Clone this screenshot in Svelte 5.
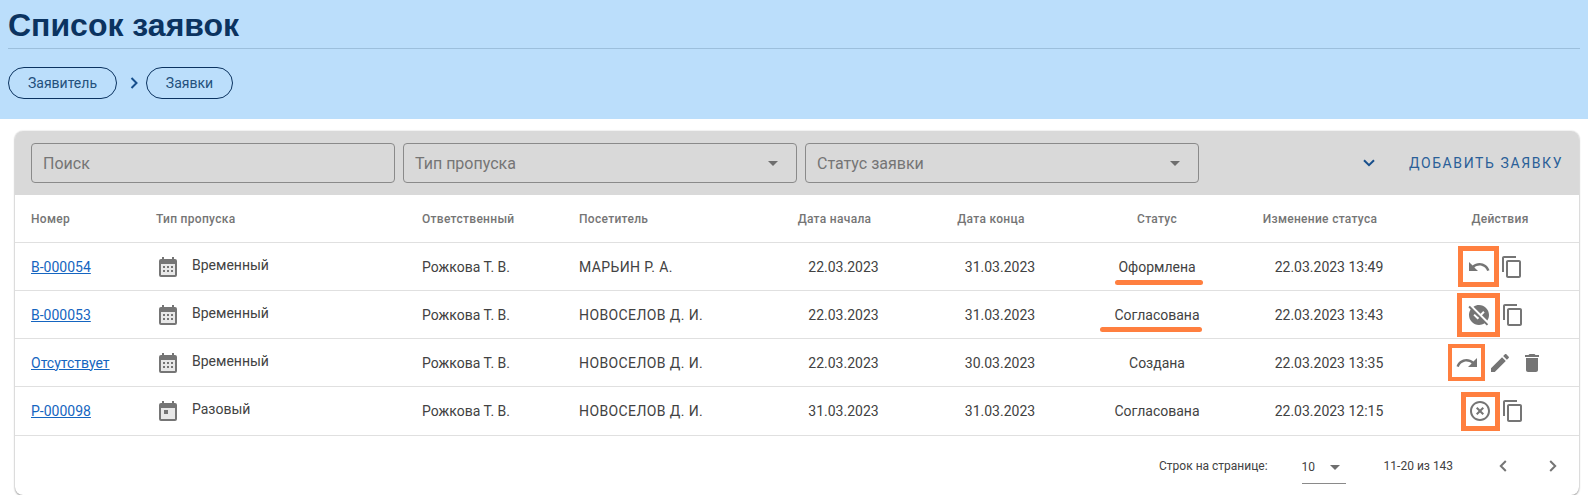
<script>
  const icons = {
    undo: 'M12.5 8c-2.65 0-5.05.99-6.9 2.6L2 7v9h9l-3.62-3.62c1.39-1.16 3.16-1.88 5.12-1.88 3.54 0 6.55 2.31 7.6 5.5l2.37-.78C21.08 11.03 17.15 8 12.5 8z',
    redo: 'M18.4 10.6C16.55 8.99 14.15 8 11.5 8c-4.65 0-8.58 3.03-9.96 7.22L3.9 16c1.05-3.19 4.05-5.5 7.6-5.5 1.95 0 3.73.72 5.12 1.88L13 16h9V7l-3.6 3.6z',
    edit: 'M3 17.25V21h3.75L17.81 9.94l-3.75-3.75L3 17.25zM20.71 7.04c.39-.39.39-1.02 0-1.41l-2.34-2.34c-.39-.39-1.02-.39-1.41 0l-1.83 1.83 3.75 3.75 1.83-1.83z',
    trash: 'M6 19c0 1.1.9 2 2 2h8c1.1 0 2-.9 2-2V7H6v12zM19 4h-3.5l-1-1h-5l-1 1H5v2h14V4z',
    cancel: 'M14.59 8L12 10.59 9.41 8 8 9.41 10.59 12 8 14.59 9.41 16 12 13.41 14.59 16 16 14.59 13.41 12 16 9.41 14.59 8zM12 2C6.47 2 2 6.47 2 12s4.47 10 10 10 10-4.47 10-10S17.53 2 12 2zm0 18c-4.41 0-8-3.59-8-8s3.59-8 8-8 8 3.59 8 8-3.59 8-8 8z',
    copy: 'M16 1H4c-1.1 0-2 .9-2 2v14h2V3h12V1zm3 4H8c-1.1 0-2 .9-2 2v14c0 1.1.9 2 2 2h11c1.1 0 2-.9 2-2V7c0-1.1-.9-2-2-2zm0 16H8V7h11v14z',
    unpublished: 'M21.19 21.19L2.81 2.81 1.39 4.22l2.27 2.27C2.61 8.07 2 9.96 2 12c0 5.52 4.48 10 10 10 2.04 0 3.93-.61 5.51-1.66l2.27 2.27 1.41-1.42zm-10.6-4.59l-4.24-4.24 1.41-1.41 2.83 2.83.18-.18 1.41 1.41-1.59 1.59zm3-5.84l-7.1-7.1C8.07 2.61 9.96 2 12 2c5.52 0 10 4.48 10 10 0 2.04-.61 3.93-1.66 5.51L15 12.17l2.65-2.65-1.41-1.41-2.65 2.65z'
  };

  const columns = ['Номер', 'Тип пропуска', 'Ответственный', 'Посетитель', 'Дата начала', 'Дата конца', 'Статус', 'Изменение статуса', 'Действия'];

  const rows = [
    { num: 'В-000054', kind: 'Временный', multi: true, owner: 'Рожкова Т. В.', visitor: 'МАРЬИН Р. А.', from: '22.03.2023', to: '31.03.2023', status: 'Оформлена', mark: 'm1', changed: '22.03.2023 13:49', main: 'undo', cls: 'a1', actions: ['copy'] },
    { num: 'В-000053', kind: 'Временный', multi: true, owner: 'Рожкова Т. В.', visitor: 'НОВОСЕЛОВ Д. И.', from: '22.03.2023', to: '31.03.2023', status: 'Согласована', mark: 'm2', changed: '22.03.2023 13:43', main: 'unpublished', cls: 'a2', actions: ['copy'] },
    { num: 'Отсутствует', kind: 'Временный', multi: true, owner: 'Рожкова Т. В.', visitor: 'НОВОСЕЛОВ Д. И.', from: '22.03.2023', to: '30.03.2023', status: 'Создана', mark: '', changed: '22.03.2023 13:35', main: 'redo', cls: 'a3', actions: ['edit', 'trash'] },
    { num: 'Р-000098', kind: 'Разовый', multi: false, owner: 'Рожкова Т. В.', visitor: 'НОВОСЕЛОВ Д. И.', from: '31.03.2023', to: '31.03.2023', status: 'Согласована', mark: '', changed: '22.03.2023 12:15', main: 'cancel', cls: 'a4', actions: ['copy'] }
  ];
</script>

{#snippet icon(name)}
  <svg class="icon" viewBox="0 0 24 24" width="24" height="24"><path d={icons[name]} /></svg>
{/snippet}

{#snippet arrow()}
  <svg class="caret" viewBox="0 0 10 5" width="10" height="5"><path d="M0 0l5 5 5-5z" /></svg>
{/snippet}

<header class="hero">
  <h1>Список заявок</h1>
  <nav class="crumbs">
    <span class="pill first">Заявитель</span>
    <svg class="crumb-sep" viewBox="0 0 8 12" width="8" height="12"><path d="M1.5 1l5 5-5 5" /></svg>
    <span class="pill second">Заявки</span>
  </nav>
</header>

<main class="card">
  <div class="toolbar">
    <div class="field search">Поиск</div>
    <div class="field select">Тип пропуска {@render arrow()}</div>
    <div class="field select">Статус заявки {@render arrow()}</div>
    <svg class="expand" viewBox="0 0 12 8" width="12" height="8"><path d="M1 1.2l5 5 5-5" /></svg>
    <span class="add">Добавить заявку</span>
  </div>

  <div class="row head">
    {#each columns as col, i}
      <div class={`c c${i}`}>{col}</div>
    {/each}
  </div>

  {#each rows as r, i}
    <div class="row body" class:tall={i === 3}>
      <div class="c c0"><a href="#top">{r.num}</a></div>
      <div class="c c1 kind">
        {#if r.multi}
          <svg class="cal" viewBox="0 0 18 20" width="18" height="20">
            <path d="M3 0h2v2h8V0h2v2h1a2 2 0 0 1 2 2v14a2 2 0 0 1-2 2H2a2 2 0 0 1-2-2V4a2 2 0 0 1 2-2h1z" />
            <rect class="hole" x="2" y="7" width="14" height="11" />
            <path d="M4 9h2v2H4zM8 9h2v2H8zM12 9h2v2h-2zM4 13h2v2H4zM8 13h2v2H8zM12 13h2v2h-2z" />
          </svg>
        {:else}
          <svg class="cal" viewBox="0 0 18 20" width="18" height="20">
            <path d="M3 0h2v2h8V0h2v2h1a2 2 0 0 1 2 2v14a2 2 0 0 1-2 2H2a2 2 0 0 1-2-2V4a2 2 0 0 1 2-2h1z" />
            <rect class="hole" x="2" y="7" width="14" height="11" />
            <path d="M5 9h4v4H5z" />
          </svg>
        {/if}
        <span>{r.kind}</span>
      </div>
      <div class="c c2">{r.owner}</div>
      <div class="c c3">{r.visitor}</div>
      <div class="c c4">{r.from}</div>
      <div class="c c5">{r.to}</div>
      <div class="c c6"><span class={r.mark}>{r.status}</span></div>
      <div class="c c7">{r.changed}</div>
      <div class={`c c8 ${r.cls}`}>
        <span class="hl">{@render icon(r.main)}</span>
        {#each r.actions as a}
          <span class={`act act-${a}`}>{@render icon(a)}</span>
        {/each}
      </div>
    </div>
  {/each}

  <footer class="pager">
    <span class="per-label">Строк на странице:</span>
    <span class="per-select">10 {@render arrow()}</span>
    <span class="range">11-20 из 143</span>
    <svg class="page-arrow prev" viewBox="0 0 8 12" width="8" height="12"><path d="M6.8 1l-5 5 5 5" /></svg>
    <svg class="page-arrow next" viewBox="0 0 8 12" width="8" height="12"><path d="M1.2 1l5 5-5 5" /></svg>
  </footer>
</main>

<style>
  :global(body) { background: #fff; font-family: Roboto, "Liberation Sans", sans-serif; color: #424242; }

  .hero { height: 119px; background: #bbdefb; padding: 0 8px; box-sizing: border-box; overflow: hidden; }
  h1 { margin: 0; height: 48px; border-bottom: 1px solid #9cbfdc; font: 700 32px/51px "Liberation Sans", Arial, sans-serif; color: #0b3360; }
  .crumbs { display: flex; align-items: center; margin-top: 18px; }
  .pill { height: 30px; display: flex; align-items: center; justify-content: center; border: 1px solid #0b3360; border-radius: 16px; font-size: 14px; color: #24507c; }
  .pill.first { width: 107px; }
  .pill.second { width: 85px; }
  .crumb-sep { margin: 0 8px 0 13px; }
  .crumb-sep path { fill: none; stroke: #174f8c; stroke-width: 2; }

  .card { margin: 12px 9px 0 15px; border-radius: 8px; background: #fff; box-shadow: 0 1px 2px rgba(0,0,0,.4), 0 0 2px rgba(0,0,0,.12); }
  .toolbar { height: 64px; background: #d9d9d9; border-radius: 8px 8px 0 0; display: flex; align-items: center; padding-left: 16px; box-sizing: border-box; }
  .field { height: 40px; box-sizing: border-box; border: 1px solid #8a8a8a; border-radius: 4px; display: flex; align-items: center; justify-content: space-between; padding: 0 18px 0 11px; font-size: 16px; color: #757575; }
  .search { width: 364px; margin-right: 8px; }
  .select { width: 394px; margin-right: 8px; }
  .caret path { fill: #6e6e6e; }
  .expand { margin-left: 156px; }
  .expand path { fill: none; stroke: #174f8c; stroke-width: 2; }
  .add { margin-left: 34px; font-size: 14px; letter-spacing: 1.6px; text-transform: uppercase; color: #2a5f98; white-space: nowrap; }

  .row { display: grid; grid-template-columns: 141px 266px 157px 190px 131px 182px 150px 176px 171px; height: 48px; align-items: center; border-bottom: 1px solid #e0e0e0; font-size: 14px; color: #424242; box-sizing: border-box; }
  .row.tall { height: 49px; }
  .head { font-size: 12px; font-weight: 500; letter-spacing: .3px; color: #757575; }
  .c0 { padding-left: 16px; }
  .c4, .c5, .c6, .c7, .c8 { text-align: center; }
  .head .c8 { padding-left: 13px; }
  .body .c4, .body .c5, .body .c7 { padding-left: 18px; }
  .body .c3 { letter-spacing: .4px; }
  a { color: #1565c0; text-decoration: underline; }

  .kind { display: flex; align-items: center; }
  .cal { margin-left: 3px; margin-right: 15px; }
  .kind span { position: relative; top: -2px; }
  .cal path { fill: #757575; }
  .hole { fill: #e8e8e8; }

  .m1, .m2 { position: relative; }
  .m1::after, .m2::after { content: ''; position: absolute; height: 5px; border-radius: 2.5px; background: #ff7f3f; }
  .m1::after { left: -3px; right: -7px; bottom: -10px; }
  .m2::after { left: -14px; right: -2px; bottom: -9px; }

  .body .c8 { display: flex; align-items: center; justify-content: center; height: 47px; padding-right: 5px; }
  .icon { display: block; fill: #757575; }
  .hl { display: flex; align-items: center; justify-content: center; border: 5px solid #ff7f3f; box-sizing: border-box; width: 41px; height: 41px; }
  .act { display: block; margin-left: 1px; }
  .act-edit { margin-left: 3px; }
  .act-trash { margin-left: 8px; }
  .a2 .hl { width: 43px; height: 44px; }
  .a3 .hl { width: 37px; height: 37px; border-width: 4px; margin-left: 10px; }
  .a4 .hl { width: 39px; height: 39px; margin-left: 3px; }

  .pager { height: 59px; display: flex; align-items: center; font-size: 12px; color: #424242; padding-left: 1144px; }
  .per-label { white-space: nowrap; }
  .per-select { width: 44px; height: 32px; margin-left: 34px; box-sizing: border-box; border-bottom: 1px solid #8a8a8a; display: flex; align-items: center; gap: 15px; margin-top: 4px; }
  .range { margin-left: 38px; font-size: 12px; }
  .page-arrow path { fill: none; stroke: #757575; stroke-width: 2; }
  .prev { margin-left: 46px; }
  .next { margin-left: 42px; }
</style>
